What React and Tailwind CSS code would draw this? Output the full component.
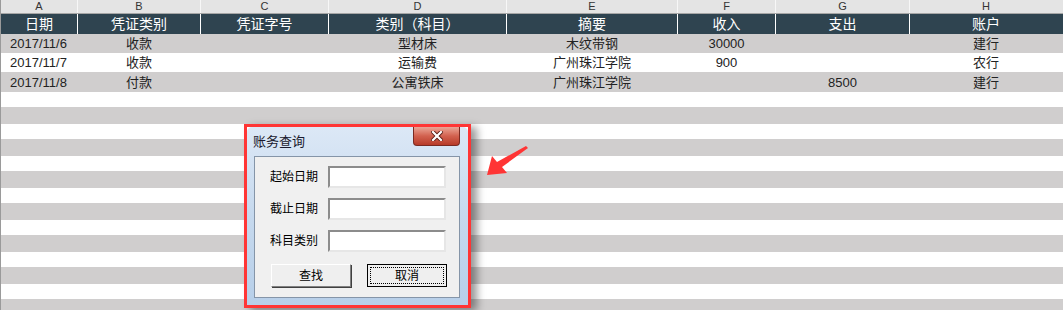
const cols = [
  { key: 'A', title: '日期', w: 'w-[76px]' },
  { key: 'B', title: '凭证类别', w: 'w-[123px]' },
  { key: 'C', title: '凭证字号', w: 'w-[128px]' },
  { key: 'D', title: '类别（科目）', w: 'w-[178px]' },
  { key: 'E', title: '摘要', w: 'w-[171px]' },
  { key: 'F', title: '收入', w: 'w-[98px]' },
  { key: 'G', title: '支出', w: 'w-[134px]' },
  { key: 'H', title: '账户', w: 'w-[153px]' },
];

const rows = [
  { bg: 'bg-[#d0cece]', h: 'h-[19px]', cells: ['2017/11/6', '收款', '', '型材床', '木纹带钢', '30000', '', '建行'] },
  { bg: 'bg-white', h: 'h-[19px]', cells: ['2017/11/7', '收款', '', '运输费', '广州珠江学院', '900', '', '农行'] },
  { bg: 'bg-[#d0cece]', h: 'h-[20px]', cells: ['2017/11/8', '付款', '', '公寓铁床', '广州珠江学院', '', '8500', '建行'] },
];

const font = { fontFamily: '"Liberation Sans", "Noto Sans CJK SC", sans-serif' };

function Field({ label }) {
  return (
    <div className="flex items-center">
      <span className="w-[58px] text-[12px] text-black">{label}</span>
      <div className="w-[118px] h-[22px] bg-white border-2 border-t-[#8c8c8c] border-l-[#8c8c8c] border-b-[#e6e6e6] border-r-[#e6e6e6]" />
    </div>
  );
}

function Dialog() {
  return (
    <div className="absolute left-[244px] top-[124px] w-[227px] h-[184px] border-[3px] border-[#ff3535] shadow-[6px_3px_8px_rgba(0,0,0,0.4)]">
      <div className="relative w-full h-full rounded-t-[5px] bg-gradient-to-b from-[#dce8f6] via-[#c6d9ee] to-[#b7cfe9] flex flex-col">
        <div className="h-[29px] flex items-center pl-[6px]">
          <span className="text-[13px] text-[#1a1a2e]">账务查询</span>
        </div>
        {/* close button */}
        <div className="absolute right-[8px] top-0 w-[47px] h-[19px] rounded-b-[4px] border border-t-0 border-[#7a2a22] bg-gradient-to-b from-[#e9a597] via-[#d2614f] to-[#b73a28] flex items-center justify-center">
          <svg width="12" height="10" viewBox="0 0 12 10">
            <path d="M2 1 L10 9 M10 1 L2 9" stroke="#5a1d15" strokeWidth="4" strokeLinecap="square" />
            <path d="M2 1 L10 9 M10 1 L2 9" stroke="#ffffff" strokeWidth="2.2" strokeLinecap="square" />
          </svg>
        </div>
        <div className="ml-[7px] w-[206px] h-[142px] bg-[#f0f0f0] border border-[#8595a8] pt-[9px] pl-[15px] flex flex-col">
          <div className="flex flex-col gap-[10px]">
            <Field label="起始日期" />
            <Field label="截止日期" />
            <Field label="科目类别" />
          </div>
          <div className="flex gap-[16px] mt-[12px] ml-[1px]">
            <div className="w-[80px] h-[23px] bg-[#efefef] border border-t-white border-l-white border-b-[#808080] border-r-[#808080] shadow-[1px_1px_0_#404040] flex items-center justify-center text-[12px] text-black">
              查找
            </div>
            <div className="w-[80px] h-[23px] border border-black bg-[#efefef] p-[2px]">
              <div className="w-full h-full border border-dotted border-black flex items-center justify-center text-[12px] text-black">
                取消
              </div>
            </div>
          </div>
        </div>
      </div>
    </div>
  );
}

export default function App() {
  return (
    <div className="relative w-[1064px] h-[310px] overflow-hidden bg-white" style={font}>
      <div className="flex flex-col border-l border-[#9a9a9a] w-[1063px]">
        {/* column letters */}
        <div className="flex h-[14px] bg-[#e4e4e4] border-b border-[#a6a6a6]">
          {cols.map((c, i) => (
            <div key={c.key} className={`${c.w} ${i ? 'border-l border-[#f7f7f7]' : ''} flex items-center justify-center text-[11px] text-[#333] leading-none`}>
              {c.key}
            </div>
          ))}
        </div>
        {/* header */}
        <div className="flex h-[20px] bg-[#2f4450]">
          {cols.map((c, i) => (
            <div key={c.key} className={`${c.w} ${i ? 'border-l border-white' : ''} flex items-center justify-center text-[14px] text-white leading-none`}>
              {c.title}
            </div>
          ))}
        </div>
        {/* data rows */}
        {rows.map((r, ri) => (
          <div key={ri} className={`flex ${r.h} ${r.bg}`}>
            {r.cells.map((v, i) => (
              <div key={i} className={`${cols[i].w} ${i ? 'border-l border-transparent justify-center' : 'pl-[9px]'} flex items-center text-[13px] text-[#222] leading-none`}>
                {v}
              </div>
            ))}
          </div>
        ))}
        {/* empty striped rows */}
        {Array.from({ length: 7 }).map((_, i) => (
          <div key={i} className="flex flex-col">
            <div className="h-[15px] bg-white" />
            <div className="h-[17px] bg-[#d0cece]" />
          </div>
        ))}
      </div>

      <Dialog />

      {/* red arrow pointer */}
      <svg className="absolute left-[482px] top-[142px]" width="50" height="40" viewBox="0 0 50 40">
        <path d="M5 33 L10 14 L15 20 L44 4 L46 6 L20 25 L25 31 Z" fill="#ff3535" />
      </svg>
    </div>
  );
}
